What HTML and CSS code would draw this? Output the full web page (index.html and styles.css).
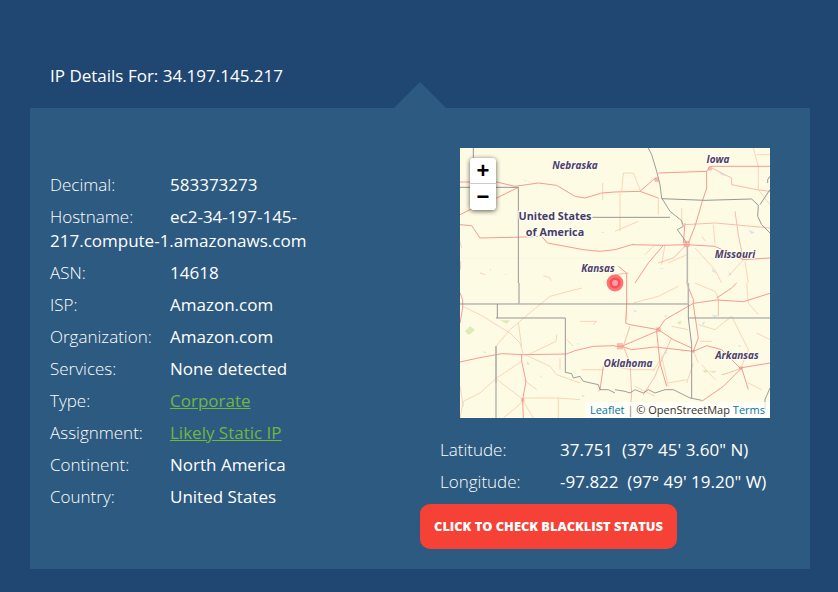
FILE: index.html
```html
<!DOCTYPE html>
<html lang="en">
<head>
<meta charset="utf-8">
<title>IP Details</title>
<link rel="stylesheet" href="styles.css">
</head>
<body>
<section class="details">
  <h2 class="title">IP Details For: 34.197.145.217</h2>
  <div class="panel">
    <div class="info">
      <p class="row"><span class="label">Decimal:</span>583373273</p>
      <p class="row"><span class="label">Hostname:</span>ec2-34-197-145-217.compute-1.amazonaws.com</p>
      <p class="row"><span class="label">ASN:</span>14618</p>
      <p class="row"><span class="label">ISP:</span>Amazon.com</p>
      <p class="row"><span class="label">Organization:</span>Amazon.com</p>
      <p class="row"><span class="label">Services:</span>None detected</p>
      <p class="row"><span class="label">Type:</span><a class="link" href="#">Corporate</a></p>
      <p class="row"><span class="label">Assignment:</span><a class="link" href="#">Likely Static IP</a></p>
      <p class="row"><span class="label">Continent:</span>North America</p>
      <p class="row"><span class="label">Country:</span>United States</p>
    </div>
    <div class="geo">
      <div class="map">
        <svg class="map-art" viewBox="0 0 310 270" width="310" height="270" aria-label="Map of Kansas and surrounding states">
          <defs>
            <path id="metro" class="metro" d="M-8-8H8V8H-8zM-8 0H8M0-8V8M-4-8V8M4-8V8M-8-4H8M-8 4H8"/>
          </defs>
          <!-- north-west -->
          <g transform="scale(.33333)">
            <path class="latline" d="M0 330H465"/>
            <path class="water" d="M182 92l20 6-4 2zM420 252h12v3zM400 300l14 3-6 1zM90 360l4 8-5-2zM130 378h10v2z"/>
            <path class="minor" d="M428 105V155M250 383l18 5 5 10M0 280l5 20M60 375l15 5"/>
            <path class="major" d="M0 102H110L165 115L235 105L290 112L345 145L375 150L425 135L465 132"/>
            <path class="major" d="M0 200L30 185L110 150L175 118"/>
            <path class="major" d="M0 230L35 233L60 270L160 268L245 265L262 285L370 305L420 310L465 305"/>
            <path class="major" d="M0 340V365"/>
            <path class="border" d="M40 0V30M0 118H175V405M397 208H465"/>
          </g>
          <!-- north-east -->
          <g transform="translate(155,0) scale(.33333)">
            <path class="latline" d="M0 330H465"/>
            <path class="water" d="M310 70l25 15-15-3zM400 245l20 8-10 6zM50 285l12 5-8 2zM290 360l15 15-12-3zM340 370l10 10-8 2zM130 360h15v3z"/>
            <path class="minor" d="M15 135V250M25 75H55L75 125M200 180V230M295 230L300 290M415 0L430 55V125M425 20H465M240 300L300 365L320 405M385 335L340 385M25 75L20 130M0 250L70 220M130 150V200M90 320L120 290M160 345L215 320M150 290L140 350M390 340L400 405M430 125L465 170M260 265L272 280"/>
            <path class="major light" d="M210 230L300 225L465 240M360 190L370 260L385 335M215 290L175 330L130 345M290 60L350 90L350 110L425 125L465 130M0 380L40 375"/>
            <path class="major" d="M130 75L275 70L285 55L465 55"/>
            <path class="major" d="M275 70V120L262 160L240 235L220 285"/>
            <path class="major" d="M0 132L75 130L115 95L125 90M75 130L130 150"/>
            <path class="major" d="M0 305L50 290L145 292L215 290L300 295L385 335L465 330"/>
            <path class="major" d="M145 292L100 345L60 405"/>
            <path class="major" d="M10 355L35 375V405"/>
            <path class="major" d="M210 225L205 285"/>
            <path class="border" d="M140 152L270 157L410 153L430 172L428 205L440 230L465 255M0 208H165M465 125L435 170M465 85L458 95V105"/>
            <path class="border river" d="M100 0L110 20L125 70L135 110L140 150L165 190L200 218L205 235L187 245L205 270L215 285"/>
            <path class="border wide" d="M217 295V405"/>
            <use href="#metro" transform="translate(215,288)"/>
            <use href="#metro" transform="translate(125,95) scale(.7)"/>
            <use href="#metro" transform="translate(285,62) scale(.6)"/>
          </g>
          <!-- south-west -->
          <g transform="translate(0,135) scale(.33333)">
            <path class="water" d="M70 205l10 3-8 3zM365 335l10 3-8 5zM350 180l8 2-4 4z"/>
            <path class="park" d="M15 145L30 130L45 140L35 150L25 155zM120 112h30l-10 10zM200 235l10 8-8 3zM240 278h6l-2 6z"/>
            <path class="minor" d="M8 70L60 95L150 150L180 180L190 215M365 15L270 40L215 85L150 140L108 190M175 120L185 190M290 155L288 175L205 215M195 215L270 250L290 275L360 300M185 235L110 285L60 330L10 355L0 405M105 285L190 350M190 345L295 345L360 350M0 310L10 370M190 355L130 405M190 355L220 405M295 345V405M360 115H410L400 125M320 170L340 190M365 260H430M300 225V260M190 290L230 320"/>
            <path class="major" d="M0 237L55 225L125 212L190 215L320 213L345 203L400 190L465 188"/>
            <path class="major" d="M185 215V235L198 295L188 350L190 405"/>
            <path class="major" d="M0 30L8 50V75L0 120"/>
            <path class="major" d="M430 250L420 320L415 325"/>
            <path class="border" d="M0 63H465M112 63V105M108 105H316V268M108 190V405"/>
            <path class="border wide" d="M177 0V63M108 190V300"/>
            <path class="border river" d="M316 268L335 272L340 285L360 280L370 295L415 305L420 320L445 320L465 330"/>
            <use href="#metro" transform="translate(188,351) scale(.55)"/>
          </g>
          <!-- south-east -->
          <g transform="translate(155,135) scale(.33333)">
            <path class="water" d="M55 80l12 5-8 3zM145 100l15-5-8 8zM195 200l15 3-8 4zM150 210l8-12-3 15zM290 95l20 3-12 5zM370 185l10 5-8 2zM260 120l10-5-4 12z"/>
            <path class="park" d="M265 260l12 2-3 8-8-3zM280 265l25-2-8 7zM185 118l15-5-5 12z"/>
            <path class="minor" d="M395 0L400 60L430 95M240 0L300 25L310 45M140 220L160 310M235 205L250 240M260 245L300 290M35 110V45M115 265L135 230M400 300L440 320M425 150L465 170M350 100L400 200L380 250M0 250L45 260M60 310L120 340M250 125L300 140L350 100M55 60L130 40L190 10M220 140L170 130M45 260H120M160 300L215 290M235 240L215 300M255 175H290"/>
            <path class="major light" d="M170 165L140 230L120 280L85 335M45 130L25 190L45 240L50 330L45 405M310 45V100M380 255L340 270M320 275L340 270"/>
            <path class="major" d="M35 0V60L32 120L45 125L130 140"/>
            <path class="major" d="M0 190H20L125 145L150 110L235 61L305 51L385 56L465 31"/>
            <path class="major" d="M20 190L50 200L120 192L235 205L275 188L320 200L375 255L465 240"/>
            <path class="major" d="M130 140L175 170L230 195"/>
            <path class="major" d="M125 145L135 240L155 310"/>
            <path class="major" d="M235 65L250 165L235 205"/>
            <path class="major" d="M260 355L325 310L380 255L400 320"/>
            <path class="major" d="M215 0L235 50V65M305 45L350 15L365 0"/>
            <path class="border" d="M0 63H220V105H465M220 105L230 185V345"/>
            <path class="border wide" d="M220 0V63"/>
            <path class="border river" d="M0 320L30 325L45 330L60 320L85 330L100 320L120 330L150 320L175 320L225 345L260 352M465 315L450 350V380"/>
            <use href="#metro" transform="translate(130,140) scale(.75)"/>
            <use href="#metro" transform="translate(15,190)"/>
            <use href="#metro" transform="translate(378,255) scale(.55)"/>
            <use href="#metro" transform="translate(235,205) scale(.45)"/>
          </g>
          <circle class="marker-halo" cx="155" cy="135" r="8.4"/>
          <circle class="marker-ring" cx="155" cy="135" r="5.6"/>
          <circle class="marker-core" cx="155" cy="135" r="3"/>
          <text class="place" x="115" y="21">Nebraska</text>
          <text class="place" x="258" y="15">Iowa</text>
          <text class="place" x="275" y="110">Missouri</text>
          <text class="place" x="138" y="124">Kansas</text>
          <text class="place" x="168" y="219">Oklahoma</text>
          <text class="place" x="277" y="211">Arkansas</text>
          <text class="country" x="95" y="72">United States</text>
          <text class="country" x="95" y="88">of America</text>
        </svg>
        <div class="zoom">
          <button class="zoom-btn" type="button">+</button>
          <button class="zoom-btn" type="button">−</button>
        </div>
        <div class="attribution"><a href="#">Leaflet</a> <span class="sep">|</span> © OpenStreetMap <a href="#">Terms</a></div>
      </div>
      <p class="row coord"><span class="label">Latitude:</span>37.751&nbsp; (37° 45' 3.60" N)</p>
      <p class="row coord"><span class="label">Longitude:</span>-97.822&nbsp; (97° 49' 19.20" W)</p>
      <a class="cta" href="#">Click to Check Blacklist Status</a>
    </div>
  </div>
</section>
</body>
</html>
```
FILE: styles.css
```css
* { box-sizing: border-box; }
html, body { margin: 0; }
body {
  height: 592px;
  overflow: hidden;
  background: #1f4772;
  color: #fff;
  font: 400 17px/24px "Open Sans", "Liberation Sans", sans-serif;
}
.details { padding: 64px 28px 0 30px; }
.title {
  margin: 0 0 20px;
  padding-left: 20px;
  font-size: 17px;
  font-weight: 400;
  line-height: 24px;
}
.panel {
  position: relative;
  display: flex;
  height: 461px;
  padding-bottom: 20px;
  background: #2d5a80;
}
.panel::before {
  content: "";
  position: absolute;
  left: 364px;
  top: -26px;
  border-style: solid;
  border-width: 0 26px 26px;
  border-color: transparent transparent #2d5a80;
}
.info { width: 390px; padding: 65px 50px 0 20px; flex: none; }
.row { margin: 0 0 8px; }
.label { display: inline-block; width: 120px; font-weight: 300; }
.link { color: #70b644; }
.geo { padding-top: 40px; }
.map {
  position: relative;
  width: 310px;
  height: 270px;
  margin: 0 0 20px 40px;
  background: #fdfbe3;
  overflow: hidden;
}
.map-art { display: block; }
.coord { padding-left: 20px; white-space: nowrap; }
.latline { fill: none; stroke: #eef3e6; stroke-width: 2; }
.water { fill: #d3e6ee; }
.park { fill: #dcebb8; }
.minor, .major, .border { fill: none; stroke-linejoin: round; }
.minor { stroke: #f8d0b2; stroke-width: 2.6; }
.major { stroke: #f59b92; stroke-width: 3; }
.major.light { stroke: #f7b3a5; stroke-width: 2.6; }
.border { stroke: #918d97; stroke-width: 2.8; }
.border.river { stroke: #6f6c78; stroke-width: 2; }
.border.wide { stroke: #b9b5b3; stroke-width: 4.5; }
.metro { fill: none; stroke: #f08f88; stroke-width: 1.5; }
.marker-halo { fill: #ff6468; opacity: .9; }
.marker-ring { fill: #ff4d55; }
.marker-core { fill: #f8a3ac; }
.place {
  fill: #4d4066;
  font: italic 700 10px "Open Sans", sans-serif;
  text-anchor: middle;
  paint-order: stroke;
  stroke: rgba(255, 255, 255, .6);
  stroke-width: 2px;
}
.country {
  fill: #483c60;
  font: 700 10.8px "Open Sans", sans-serif;
  text-anchor: middle;
  paint-order: stroke;
  stroke: rgba(255, 255, 255, .85);
  stroke-width: 2.5px;
}
.zoom {
  position: absolute;
  left: 10px;
  top: 10px;
  display: flex;
  flex-direction: column;
  border-radius: 4px;
  box-shadow: 0 1px 5px rgba(0, 0, 0, .65);
  overflow: hidden;
}
.zoom-btn {
  width: 26px;
  height: 26px;
  padding: 0;
  border: 0;
  border-bottom: 1px solid #ccc;
  background: #fff;
  color: #000;
  font: 700 22px/26px "Liberation Sans", Arial, sans-serif;
}
.zoom-btn:last-child { border-bottom: 0; }
.attribution {
  position: absolute;
  right: 0;
  bottom: 0;
  padding: 0 5px;
  background: rgba(255, 255, 255, .7);
  color: #333;
  font-size: 11px;
  line-height: 16px;
}
.attribution a { color: #0078a8; text-decoration: none; }
.attribution .sep { color: #888; }
.cta {
  display: block;
  width: 257px;
  height: 45px;
  margin-top: 10px;
  border-radius: 10px;
  background: #f64137;
  color: #fff;
  font-size: 12.8px;
  font-weight: 800;
  line-height: 45px;
  text-align: center;
  text-decoration: none;
  text-transform: uppercase;
}
```
